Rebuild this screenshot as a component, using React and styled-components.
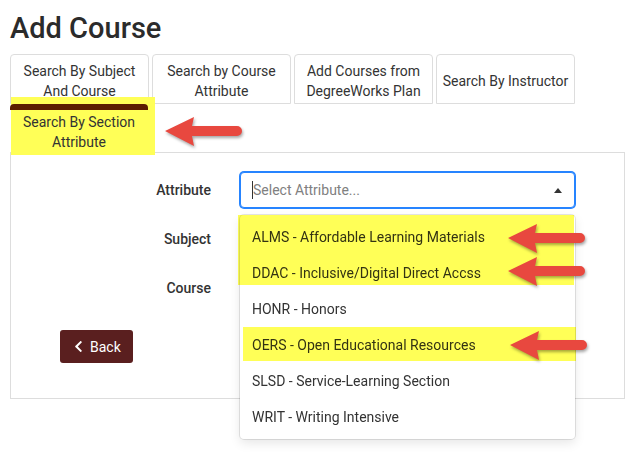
import React from "react"
import styled, { createGlobalStyle } from 'styled-components';
import { FaChevronLeft } from 'react-icons/fa';

const GlobalStyle = createGlobalStyle`
  body {
    margin: 0;
    background: #ffffff;
    font-family: Roboto, "Liberation Sans", Arial, sans-serif;
    color: #333333;
  }
`;

const attributes = [
  'ALMS - Affordable Learning Materials',
  'DDAC - Inclusive/Digital Direct Accss',
  'HONR - Honors',
  'OERS - Open Educational Resources',
  'SLSD - Service-Learning Section',
  'WRIT - Writing Intensive',
];

const Arrow = ({ x, y }) => (
  <StyledArrow $x={x} $y={y} viewBox="0 0 78 31" width="78" height="31">
    <path d="M1 15 L30 1 L28 10 L73 10 A5 5 0 0 1 73 20 L28 20 L30 30 Z" fill="#e8483f" />
  </StyledArrow>
);

export default function App() {
  return (
    <>
      <GlobalStyle />
      <StyledPage>
        <StyledTitle>Add Course</StyledTitle>

        <StyledTabRow>
          <StyledTab>Search By Subject<br />And Course</StyledTab>
          <StyledTab>Search by Course<br />Attribute</StyledTab>
          <StyledTab>Add Courses from<br />DegreeWorks Plan</StyledTab>
          <StyledTab>Search By Instructor</StyledTab>
        </StyledTabRow>

        <StyledMarked>
          <StyledActiveTab>Search By Section<br />Attribute</StyledActiveTab>
        </StyledMarked>

        <StyledPanel>
          <StyledForm>
            <StyledLabel>Attribute</StyledLabel>
            <StyledField>
              <StyledControl $focused>
                <StyledCursor />
                <StyledPlaceholder>Select Attribute...</StyledPlaceholder>
                <StyledTriangle />
              </StyledControl>
              <StyledMenu>
                {attributes.map((a) => (
                  <StyledOption key={a}>{a}</StyledOption>
                ))}
                <StyledHighlight $left={-2} $top={0} $width={336} $height={70} />
                <StyledHighlight $left={3} $top={112} $width={333} $height={34} />
              </StyledMenu>
            </StyledField>

            <StyledLabel>Subject</StyledLabel>
            <StyledField>
              <StyledControl />
            </StyledField>

            <StyledLabel>Course</StyledLabel>
            <StyledField>
              <StyledControl />
            </StyledField>
          </StyledForm>

          <StyledActions>
            <StyledBackButton>
              <FaChevronLeft size={13} />
              Back
            </StyledBackButton>
          </StyledActions>
        </StyledPanel>

        <Arrow x={164} y={116} />
        <Arrow x={507} y={223} />
        <Arrow x={507} y={256} />
        <Arrow x={509} y={330} />
      </StyledPage>
    </>
  );
}

const StyledPage = styled.div`
  position: relative;
  padding: 10px 9px 20px 10px;
  min-height: 453px;
  box-sizing: border-box;
`;

const StyledTitle = styled.h1`
  margin: 0 0 8px 0;
  font-size: 29px;
  line-height: 36px;
  font-weight: 500;
  color: #2b2b2b;
`;

const StyledTabRow = styled.div`
  display: flex;
  gap: 3px;
`;

const StyledTab = styled.div`
  width: 139px;
  height: 50px;
  box-sizing: border-box;
  border: 1px solid #dddddd;
  border-radius: 4px 4px 0 0;
  padding: 7px 2px 3px;
  display: flex;
  align-items: center;
  justify-content: center;
  text-align: center;
  font-size: 14px;
  line-height: 20px;
  color: #333333;
`;

const StyledMarked = styled.div`
  position: relative;
  z-index: 2;
  width: 144px;
  margin: -7px 0 0 1px;
  padding-top: 7px;
  background: #ffff57;
`;

const StyledActiveTab = styled.div`
  width: 138px;
  margin-left: -1px;
  box-sizing: border-box;
  border-top: 6px solid #5a1d00;
  border-radius: 4px 4px 0 0;
  padding: 2px 6px 3px;
  text-align: center;
  font-size: 14px;
  line-height: 20px;
  color: #333333;
`;

const StyledPanel = styled.div`
  position: relative;
  z-index: 1;
  margin-top: -3px;
  border: 1px solid #dddddd;
  padding: 19px 0 35px;
`;

const StyledForm = styled.div`
  display: grid;
  grid-template-columns: 200px 335px;
  grid-auto-rows: 36px;
  column-gap: 29px;
  row-gap: 13px;
`;

const StyledLabel = styled.div`
  display: flex;
  align-items: center;
  justify-content: flex-end;
  font-size: 14px;
  font-weight: 500;
  color: #333333;
`;

const StyledField = styled.div`
  position: relative;
`;

const StyledControl = styled.div`
  height: 36px;
  box-sizing: border-box;
  display: flex;
  align-items: center;
  padding: 0 12px 0 11px;
  border: 1px solid ${(p) => (p.$focused ? '#2684ff' : '#cccccc')};
  box-shadow: ${(p) => (p.$focused ? '0 0 0 1px #2684ff' : 'none')};
  border-radius: 4px;
  background: #ffffff;
`;

const StyledCursor = styled.span`
  width: 1px;
  height: 18px;
  background: #333333;
`;

const StyledPlaceholder = styled.span`
  flex: 1;
  font-size: 14px;
  color: #808080;
`;

const StyledTriangle = styled.span`
  width: 0;
  height: 0;
  border-left: 4px solid transparent;
  border-right: 4px solid transparent;
  border-bottom: 5px solid #333333;
`;

const StyledMenu = styled.div`
  position: absolute;
  top: calc(100% + 7px);
  left: 0;
  width: 100%;
  z-index: 3;
  box-sizing: border-box;
  padding: 4px 0;
  background: #ffffff;
  border-radius: 4px;
  box-shadow: 0 0 0 1px rgba(0, 0, 0, 0.1), 0 4px 11px rgba(0, 0, 0, 0.1);
`;

const StyledOption = styled.div`
  padding: 8px 12px;
  font-size: 14px;
  line-height: 20px;
  color: #333333;
`;

const StyledHighlight = styled.div`
  position: absolute;
  left: ${(p) => p.$left}px;
  top: ${(p) => p.$top}px;
  width: ${(p) => p.$width}px;
  height: ${(p) => p.$height}px;
  background: #ffff57;
  mix-blend-mode: multiply;
`;

const StyledActions = styled.div`
  padding: 24px 0 0 49px;
`;

const StyledBackButton = styled.button`
  display: inline-flex;
  align-items: center;
  gap: 5px;
  height: 33px;
  padding: 0 12px;
  border: none;
  border-radius: 3px;
  background: #5a1f1f;
  color: #ffffff;
  font-family: Roboto, "Liberation Sans", Arial, sans-serif;
  font-size: 14px;
`;

const StyledArrow = styled.svg`
  position: absolute;
  left: ${(p) => p.$x}px;
  top: ${(p) => p.$y}px;
  z-index: 5;
  filter: drop-shadow(1px 2px 1.5px rgba(0, 0, 0, 0.35));
`;
